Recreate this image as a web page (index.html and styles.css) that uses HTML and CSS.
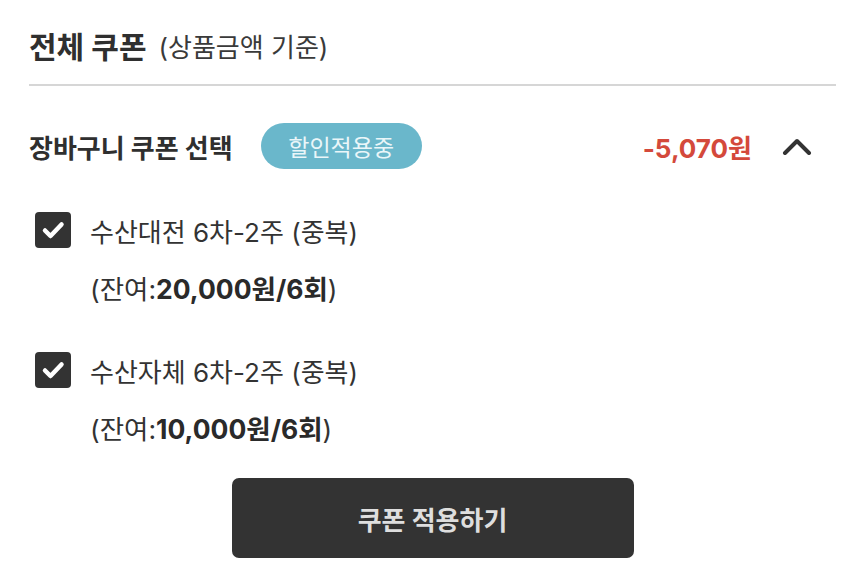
FILE: index.html
```html
<!DOCTYPE html>
<html lang="ko">
<head>
    <meta charset="UTF-8">
    <meta name="viewport" content="width=device-width, initial-scale=1.0">
    <title>쿠폰 선택</title>
    <link rel="stylesheet" href="styles.css">
</head>
<body>
    <div class="page">
        <!-- 전체 쿠폰 헤더 -->
        <div class="coupon-header">
            <span class="coupon-title">전체 쿠폰</span>
            <span class="coupon-sub">(상품금액 기준)</span>
        </div>

        <!-- 장바구니 쿠폰 -->
        <div class="cart-row">
            <span class="cart-title">장바구니 쿠폰 선택</span>
            <span class="badge">할인적용중</span>
            <span class="discount">-5,070원</span>
            <svg class="chevron" width="30" height="17" viewBox="0 0 30 17">
                <polyline points="3,15 15,3 27,15" fill="none" stroke="#333" stroke-width="4" stroke-linecap="round" stroke-linejoin="round"/>
            </svg>
        </div>

        <div class="coupon-list">
            <div class="coupon-item">
                <label class="coupon-check">
                    <span class="checkbox">
                        <svg width="36" height="36" viewBox="0 0 36 36">
                            <polyline points="10,18.5 15.5,24 26.5,12.5" fill="none" stroke="#fff" stroke-width="4.5" stroke-linecap="round" stroke-linejoin="round"/>
                        </svg>
                    </span>
                    <span class="coupon-name">수산대전 6차-2주 (중복)</span>
                </label>
                <div class="coupon-remain">(잔여:<b>20,000원/6회</b>)</div>
            </div>
            <div class="coupon-item">
                <label class="coupon-check">
                    <span class="checkbox">
                        <svg width="36" height="36" viewBox="0 0 36 36">
                            <polyline points="10,18.5 15.5,24 26.5,12.5" fill="none" stroke="#fff" stroke-width="4.5" stroke-linecap="round" stroke-linejoin="round"/>
                        </svg>
                    </span>
                    <span class="coupon-name">수산자체 6차-2주 (중복)</span>
                </label>
                <div class="coupon-remain">(잔여:<b>10,000원/6회</b>)</div>
            </div>
        </div>

        <div class="actions">
            <button class="apply-btn">쿠폰 적용하기</button>
        </div>
    </div>
</body>
</html>
```

FILE: styles.css
```css
body {
    margin: 0;
    background: #fff;
    color: #333;
    font-family: Inter, "Noto Sans CJK KR", sans-serif;
}

.page {
    padding: 0 14px 0 29px;
}

/* 헤더 */
.coupon-header {
    display: flex;
    align-items: center;
    gap: 12px;
    height: 40px;
    padding: 25px 0 19px;
    border-bottom: 2px solid #d6d6d6;
}
.coupon-title { font-size: 30px; font-weight: 700; color: #2f2f2f; }
.coupon-sub { font-size: 26px; color: #3a3a3a; }

/* 장바구니 쿠폰 줄 */
.cart-row {
    display: flex;
    align-items: center;
    height: 46px;
    margin-top: 37px;
    padding-right: 24px;
}
.cart-title { font-size: 26px; font-weight: 700; color: #2f2f2f; }
.badge {
    margin-left: 28px;
    width: 161px;
    height: 46px;
    border-radius: 23px;
    background: #6ab7cb;
    color: #eaf6f9;
    font-size: 23px;
    display: flex;
    align-items: center;
    justify-content: center;
}
.discount {
    margin-left: auto;
    font-size: 26px;
    font-weight: 700;
    color: #d4493b;
}
.chevron { margin-left: 30px; }

/* 쿠폰 목록 */
.coupon-list { margin-top: 43px; }
.coupon-item + .coupon-item { margin-top: 45px; }
.coupon-check {
    display: flex;
    align-items: center;
    gap: 19px;
    padding-left: 6px;
    height: 36px;
}
.checkbox {
    width: 36px;
    height: 36px;
    border-radius: 4px;
    background: #333;
    display: block;
}
.checkbox svg { display: block; }
.coupon-name { font-size: 26px; color: #333; }
.coupon-remain {
    margin-top: 23px;
    padding-left: 61px;
    height: 36px;
    line-height: 36px;
    font-size: 26.5px;
    color: #333;
}
.coupon-remain b { font-weight: 700; color: #2a2a2a; }

/* 적용 버튼 */
.actions {
    display: flex;
    justify-content: center;
    margin-top: 31px;
}
.apply-btn {
    width: 402px;
    height: 80px;
    border: none;
    border-radius: 7px;
    background: #333;
    color: #dedede;
    font-family: inherit;
    font-size: 26px;
    font-weight: 700;
    cursor: pointer;
}
```
